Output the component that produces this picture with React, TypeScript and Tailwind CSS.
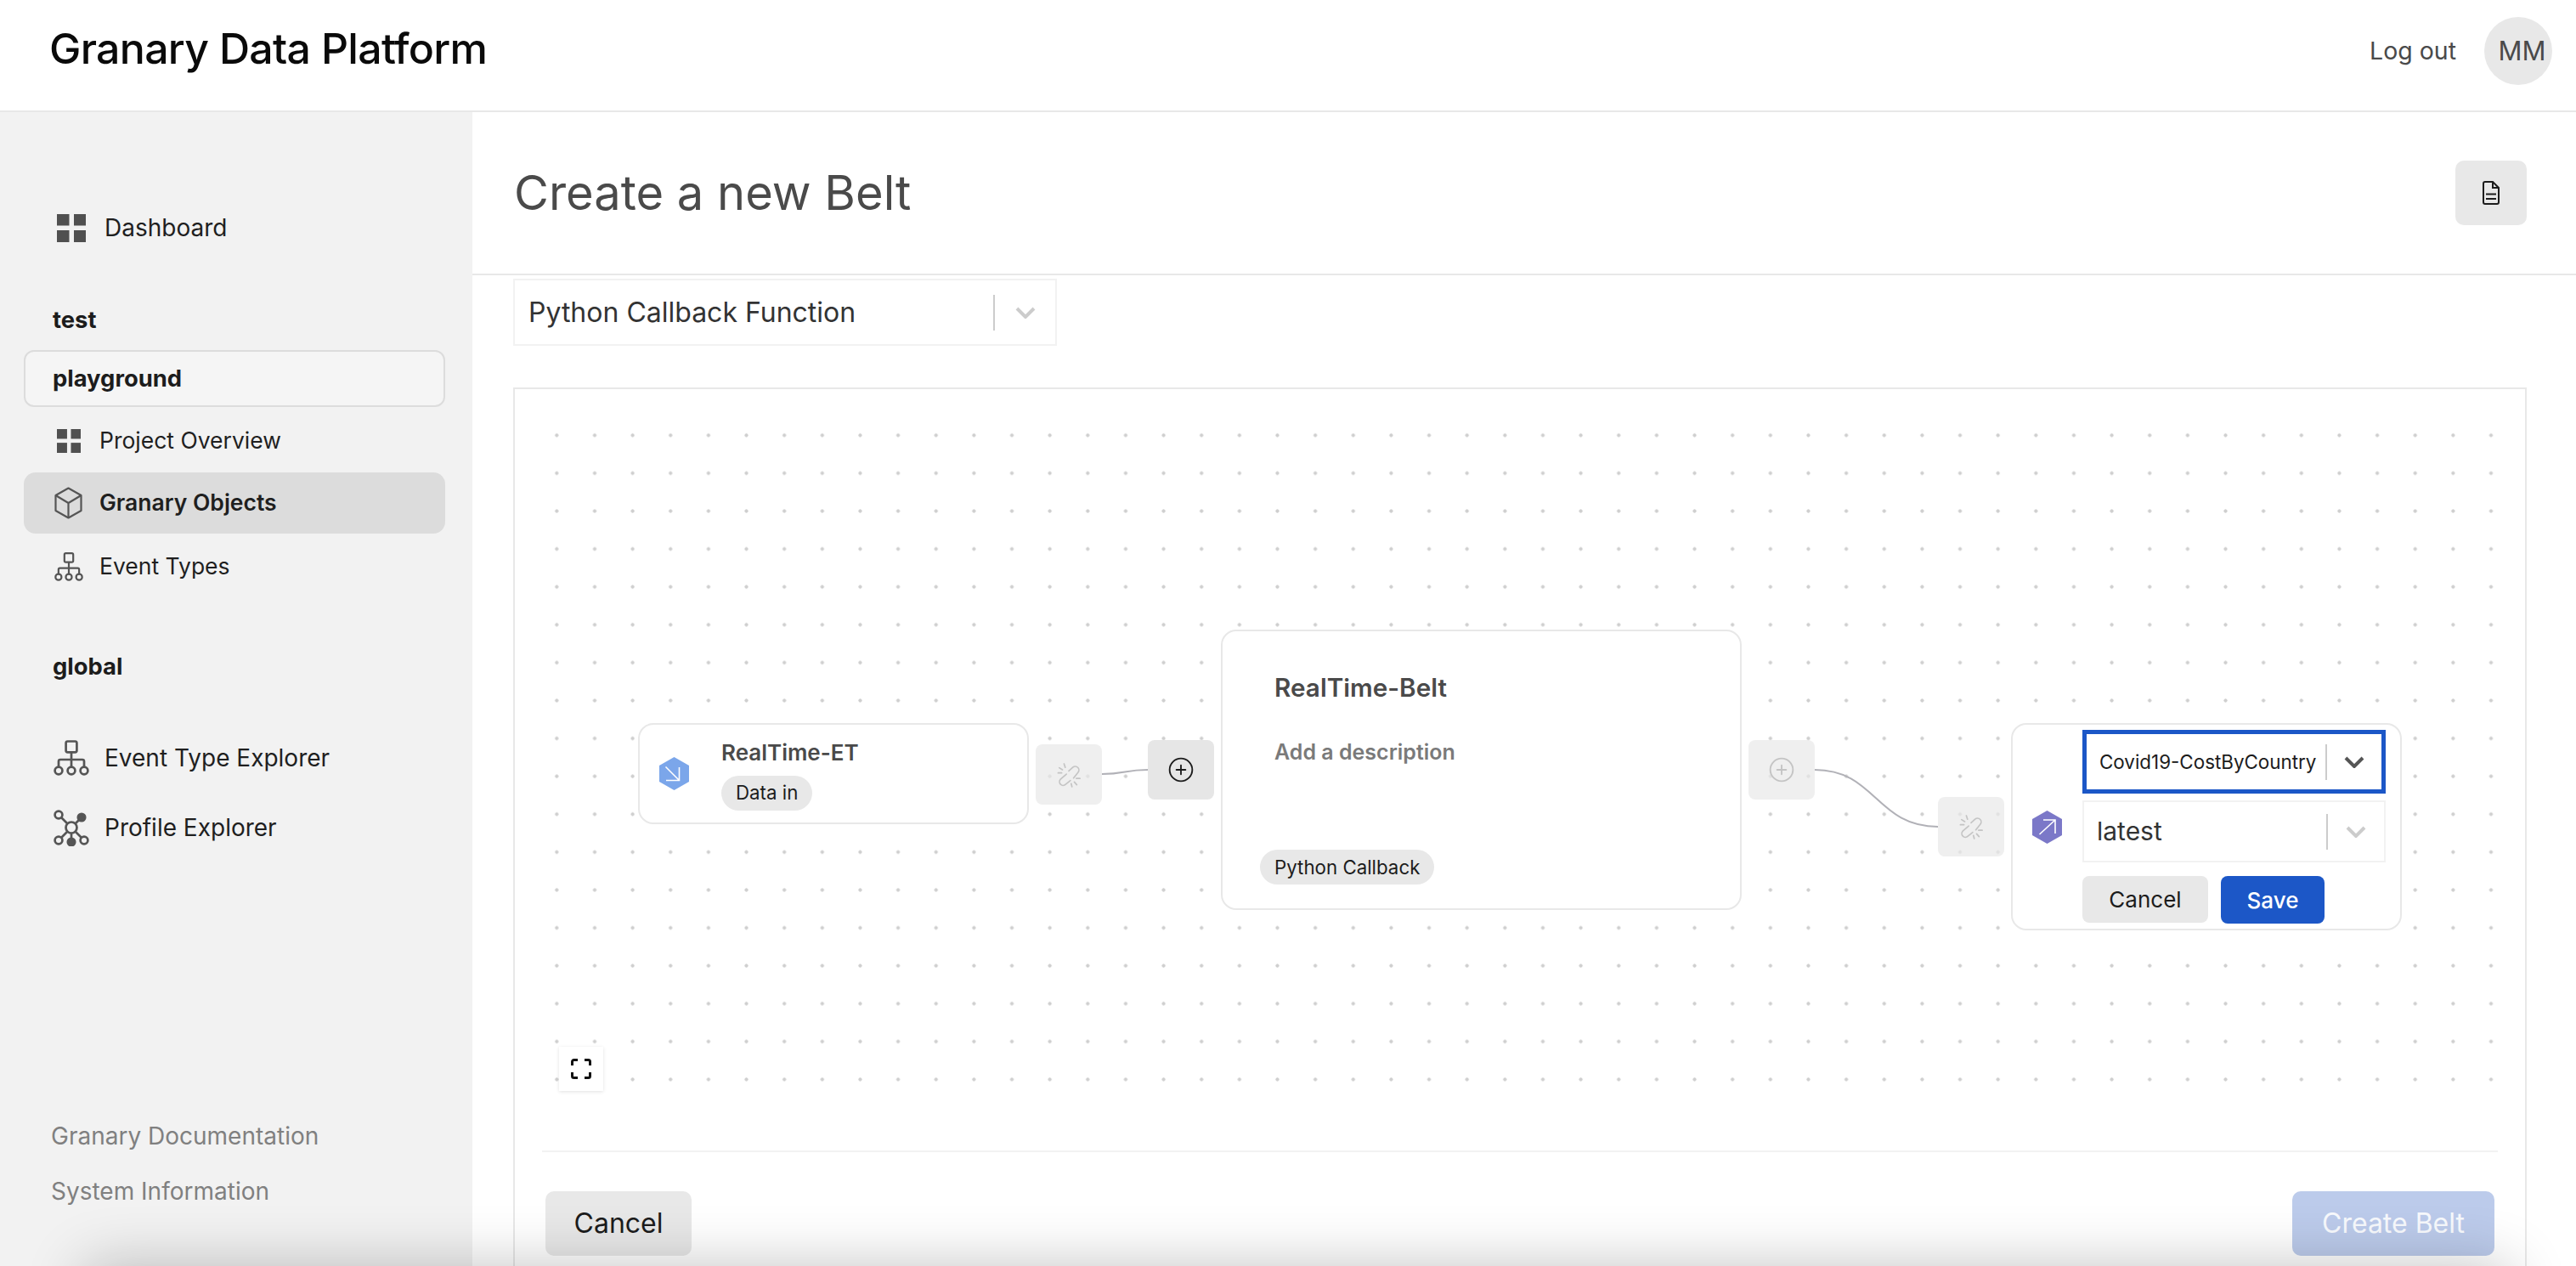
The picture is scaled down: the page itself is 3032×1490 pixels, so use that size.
import { CirclePlus } from "lucide-react"

function GridIcon({ className }: { className: string }) {
    return (
        <svg className={className} viewBox="0 0 34 33" fill="#505050" preserveAspectRatio="none">
            <rect x="0" y="0" width="14.5" height="13.5" />
            <rect x="20" y="0" width="14" height="13.5" />
            <rect x="0" y="19" width="14.5" height="14" />
            <rect x="20" y="19" width="14" height="14" />
        </svg>
    )
}

function CubeIcon() {
    return (
        <svg className="h-[38px] w-[33px]" viewBox="0 0 33 38" fill="none" stroke="#555" strokeWidth="2.2" strokeLinejoin="round">
            <path d="M16.5 1.5 31.5 10V28L16.5 36.5 1.5 28V10Z" />
            <path d="M1.5 10 16.5 19 31.5 10M16.5 19V36.5" />
        </svg>
    )
}

function HierarchyIcon({ className }: { className: string }) {
    return (
        <svg className={className} viewBox="0 0 42 44" fill="none" stroke="#555" strokeWidth="2.7">
            <rect x="14.6" y="2.5" width="12.8" height="12.8" rx="2" />
            <path d="M21 15.5V32M6 32v-6a2 2 0 0 1 2-2h26a2 2 0 0 1 2 2v6" />
            <circle cx="6" cy="37" r="4.4" fill="#f2f2f2" />
            <circle cx="21" cy="37" r="4.4" fill="#f2f2f2" />
            <circle cx="36" cy="37" r="4.4" fill="#f2f2f2" />
        </svg>
    )
}

function NetworkIcon() {
    return (
        <svg className="h-[44px] w-[42px]" viewBox="0 0 42 44" fill="none" stroke="#555" strokeWidth="2.7">
            <path d="M9 10 16 17M31 12 26 17M9 34 16 27M33 34 26 27M21 28V36" />
            <circle cx="21" cy="22" r="6.5" />
            <circle cx="6" cy="7" r="4.4" />
            <circle cx="33" cy="10" r="4.2" fill="#555" />
            <circle cx="6" cy="37" r="4.4" />
            <circle cx="21" cy="39" r="4.2" fill="#555" />
            <circle cx="36" cy="37" r="4.4" />
        </svg>
    )
}

function BrokenLink() {
    return (
        <svg className="h-[30px] w-[28px]" viewBox="0 0 30 32" fill="none" stroke="#c4c4c4" strokeWidth="1.8" strokeLinecap="round">
            <path d="M15 11 20 6.5a4.6 4.6 0 0 1 6.5 6.5L21 20" />
            <path d="M12 15 4.5 21.5a4.6 4.6 0 0 0 6.5 6.5L17 23" />
            <path d="M9 2 10.5 6.5M3 7 7 9.5M1.5 13.5 6 13.5M24.5 20.5 29 20.5M22 25 25 28.5M18 27 19 31" />
        </svg>
    )
}

function Chevron({ className }: { className: string }) {
    return (
        <svg className={className} viewBox="0 0 24 14" fill="none" stroke="currentColor" strokeWidth="4">
            <path d="M2 2 12 12 22 2" />
        </svg>
    )
}

function Hexagon({ fill, arrow }: { fill: string; arrow: string }) {
    return (
        <svg className="h-[39px] w-[35px]" viewBox="0 0 35 39">
            <polygon points="17.5,0 35,10 35,29 17.5,39 0,29 0,10" fill={fill} />
            <path d={arrow} fill="none" stroke="#fff" strokeWidth="1.6" />
        </svg>
    )
}

function NavRow({ icon, label, active }: { icon: React.ReactNode; label: string; active?: boolean }) {
    return (
        <div className={`ml-[28px] mr-[32px] flex h-[72px] items-center rounded-[14px] ${active ? "bg-[#dcdcdc] font-semibold" : ""}`}>
            <div className="flex w-[89px] justify-center pl-[36px] pr-[20px]">{icon}</div>
            <span className="text-[26.5px] text-[#1f1f1f]">{label}</span>
        </div>
    )
}

function Sidebar() {
    return (
        <aside className="flex w-[556px] shrink-0 flex-col bg-[#f2f2f2] pb-[68px] pt-[106px]">
            <div className="flex h-[60px] items-center pl-[67px]">
                <GridIcon className="h-[33px] w-[34px]" />
                <span className="ml-[22px] text-[28px] text-[#1f1f1f]">Dashboard</span>
            </div>
            <div className="mt-[58px] h-[40px] pl-[62px] text-[27.4px] font-bold leading-[40px] text-[#1c1c1c]">test</div>
            <div className="ml-[28px] mr-[32px] mt-[16px] flex h-[67px] items-center rounded-[12px] border-2 border-[#dcdcdc] bg-[#f5f5f5] pl-[32px] text-[27.4px] font-bold text-[#1c1c1c]">
                playground
            </div>
            <div className="mt-[4px]">
                <NavRow icon={<GridIcon className="h-[28px] w-[28px] shrink-0" />} label="Project Overview" />
            </div>
            <div className="mt-[1px]">
                <NavRow icon={<CubeIcon />} label="Granary Objects" active />
            </div>
            <div className="mt-[3px]">
                <NavRow icon={<HierarchyIcon className="h-[36px] w-[34px] shrink-0" />} label="Event Types" />
            </div>
            <div className="mt-[61px] h-[40px] pl-[62px] text-[27.4px] font-bold leading-[40px] text-[#1c1c1c]">global</div>
            <div className="mt-[58px] flex h-[60px] items-center pl-[63px]">
                <HierarchyIcon className="h-[44px] w-[42px]" />
                <span className="ml-[18px] text-[28px] text-[#1f1f1f]">Event Type Explorer</span>
            </div>
            <div className="mt-[22px] flex h-[60px] items-center pl-[63px]">
                <NetworkIcon />
                <span className="ml-[18px] text-[28px] text-[#1f1f1f]">Profile Explorer</span>
            </div>
            <div className="mt-auto flex flex-col gap-[25px] pl-[60px] text-[28px] leading-[40px] text-[#808080]">
                <span>Granary Documentation</span>
                <span>System Information</span>
            </div>
        </aside>
    )
}

function SelectBox({
    label,
    className,
    textClass,
    chevClass,
    focused
}: {
    label: string
    className: string
    textClass: string
    chevClass: string
    focused?: boolean
}) {
    return (
        <div className={`flex items-center ${focused ? "border-[5px] border-[#1c57c7]" : "border-2 border-[#f2f2f2]"} ${className}`}>
            <span className={`flex-1 whitespace-nowrap ${textClass}`}>{label}</span>
            <div className="h-[42px] w-[2px] bg-[#cccccc]" />
            <div className={`flex justify-center ${chevClass}`}>
                <Chevron className={`h-[14px] w-[24px] ${focused ? "text-[#555555]" : "text-[#cccccc]"}`} />
            </div>
        </div>
    )
}

function FlowCanvas() {
    return (
        <div className="relative h-[896px]">
            <div className="absolute left-[26.7px] top-[31.7px] h-[802.8px] w-[2321.8px] bg-[radial-gradient(circle,#cfcfcf_1.8px,transparent_2.4px)] bg-[length:44.65px_44.6px]" />
            <svg className="absolute inset-0 h-full w-full" fill="none" stroke="#b1b1b7" strokeWidth="2">
                <path d="M691 453C718 453 718 448 745 448" />
                <path d="M1530 448C1602 448 1602 515 1675 515" />
            </svg>

            <div className="absolute left-[145px] top-[393px] flex h-[119px] w-[460px] items-center rounded-[18px] border-2 border-[#e8e8e8] bg-white pl-[23px]">
                <Hexagon fill="#7ba6ea" arrow="M7.5 11.5 23.5 27.5M8 27.5H23.5V12" />
                <div className="ml-[38px] flex flex-col items-start">
                    <span className="text-[26px] font-semibold leading-[36px] text-[#4a4a4a]">RealTime-ET</span>
                    <span className="mt-[9px] flex h-[41px] items-center rounded-full bg-[#e8e8e8] px-[17px] text-[22.3px] text-[#1c1c1c]">Data in</span>
                </div>
            </div>

            <div className="absolute left-[613px] top-[418px] flex h-[71px] w-[78px] items-center justify-center rounded-[8px] bg-[#e8e8e8]/70">
                <BrokenLink />
            </div>
            <div className="absolute left-[745px] top-[413px] flex h-[70px] w-[78px] items-center justify-center rounded-[8px] bg-[#e6e6e6]">
                <CirclePlus size={32} strokeWidth={1.4} color="#1c1c1c" />
            </div>

            <div className="absolute left-[831px] top-[283px] flex h-[330px] w-[613px] flex-col rounded-[18px] border-2 border-[#e8e8e8] bg-white">
                <span className="ml-[61px] mt-[46px] text-[29.7px] font-semibold leading-[40px] text-[#4a4a4a]">RealTime-Belt</span>
                <span className="ml-[61px] mt-[38px] text-[25px] font-semibold leading-[36px] text-[#7a7a7a]">Add a description</span>
                <span className="ml-[44px] mt-[97px] flex h-[41px] w-fit items-center rounded-full bg-[#e8e8e8] px-[17px] text-[22.3px] text-[#1c1c1c]">Python Callback</span>
            </div>

            <div className="absolute left-[1452px] top-[413px] flex h-[70px] w-[78px] items-center justify-center rounded-[8px] bg-[#e8e8e8]/70">
                <CirclePlus size={32} strokeWidth={1.4} color="#c4c4c4" />
            </div>
            <div className="absolute left-[1675px] top-[480px] flex h-[70px] w-[78px] items-center justify-center rounded-[8px] bg-[#e8e8e8]/70">
                <BrokenLink />
            </div>

            <div className="absolute left-[1761px] top-[393px] flex h-[244px] w-[460px] items-center rounded-[18px] border-2 border-[#e8e8e8] bg-white pl-[23px]">
                <Hexagon fill="#7b78c8" arrow="M8.5 28 27 11M13 11H27V27" />
                <div className="ml-[24px] flex flex-col">
                    <SelectBox
                        label="Covid19-CostByCountry"
                        focused
                        className="h-[75px] w-[357px] pl-[15px]"
                        textClass="text-[22.4px] text-[#1c1c1c]"
                        chevClass="w-[64px]"
                    />
                    <SelectBox
                        label="latest"
                        className="mt-[8px] h-[73px] w-[357px] pl-[15px]"
                        textClass="text-[30px] text-[#333333]"
                        chevClass="w-[66px]"
                    />
                    <div className="mt-[16px] flex gap-[15px]">
                        <span className="flex h-[55px] w-[148px] items-center justify-center rounded-[8px] bg-[#e8e8e8] text-[26px] text-[#1c1c1c]">Cancel</span>
                        <span className="flex h-[56px] w-[122px] items-center justify-center rounded-[8px] bg-[#1c57c7] text-[26px] font-medium text-white">Save</span>
                    </div>
                </div>
            </div>

            <div className="absolute left-[52px] top-[774px] flex h-[52px] w-[52px] items-center justify-center bg-white shadow-[0_1px_4px_rgba(0,0,0,0.12)]">
                <svg className="h-[24px] w-[24px]" viewBox="0 0 24 24" fill="none" stroke="#111" strokeWidth="3">
                    <path d="M1.5 8V3.5a2 2 0 0 1 2-2H8M16 1.5h4.5a2 2 0 0 1 2 2V8M22.5 16v4.5a2 2 0 0 1-2 2H16M8 22.5H3.5a2 2 0 0 1-2-2V16" />
                </svg>
            </div>
        </div>
    )
}

export default function App() {
    return (
        <div className="relative flex h-[1490px] w-[3032px] flex-col overflow-hidden bg-white [font-family:Inter,sans-serif]">
            <header className="flex h-[132px] shrink-0 items-center justify-between border-b-2 border-[#e8e8e8] pl-[58px] pr-[28px]">
                <span className="mb-[16px] text-[50px] font-medium tracking-[-0.7px] text-[#0a0a0a]">Granary Data Platform</span>
                <div className="mb-[10px] flex items-center gap-[33px]">
                    <span className="text-[28.5px] text-[#4a4a4a]">Log out</span>
                    <div className="flex h-[80px] w-[80px] items-center justify-center rounded-full bg-[#e8e8e8] pl-[9px] text-[31px] text-[#4a4a4a]">MM</div>
                </div>
            </header>
            <div className="flex min-h-0 flex-1">
                <Sidebar />
                <main className="min-w-0 flex-1 overflow-hidden">
                    <div className="flex h-[192px] items-center justify-between border-b-2 border-[#e8e8e8] pl-[49px] pr-[58px]">
                        <h1 className="text-[56px] text-[#4a4a4a]">Create a new Belt</h1>
                        <button className="flex h-[76px] w-[84px] items-center justify-center rounded-[10px] bg-[#e8e8e8]">
                            <svg className="h-[28px] w-[20px]" viewBox="0 0 20 28" fill="none" stroke="#1c1c1c" strokeWidth="2">
                                <path d="M3 1H12L19 8V25A2 2 0 0 1 17 27H3A2 2 0 0 1 1 25V3A2 2 0 0 1 3 1Z" />
                                <path d="M12 1V8H19M4 15.5H16M4 21H16" />
                            </svg>
                        </button>
                    </div>
                    <SelectBox
                        label="Python Callback Function"
                        className="ml-[48px] mt-[4px] h-[79px] w-[640px] pl-[16px]"
                        textClass="text-[32px] text-[#333333]"
                        chevClass="w-[71px]"
                    />
                    <div className="ml-[48px] mt-[49px] w-[2370px] border-2 border-[#e8e8e8]">
                        <FlowCanvas />
                        <div className="mx-[32px] border-t-2 border-[#f2f2f2] px-[4px] pt-[46px]">
                            <div className="flex justify-between pb-[40px]">
                                <button className="flex h-[76px] w-[172px] items-center justify-center rounded-[10px] bg-[#e8e8e8] text-[32px] text-[#1c1c1c]">Cancel</button>
                                <button className="flex h-[76px] w-[238px] items-center justify-center rounded-[10px] bg-[#bccbeb] text-[32px] text-white/90">Create Belt</button>
                            </div>
                        </div>
                    </div>
                </main>
            </div>
            <div className="absolute left-[100px] right-[80px] top-[1490px] h-[100px] shadow-[0_0_70px_rgba(0,0,0,0.24)]" />
        </div>
    )
}
